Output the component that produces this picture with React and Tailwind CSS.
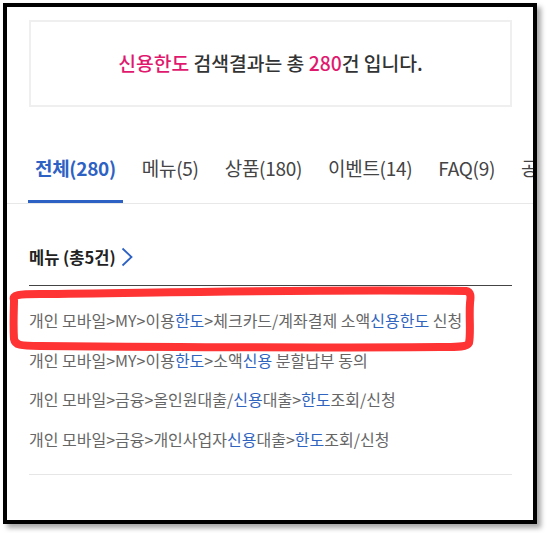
import React from 'react'

const font = { fontFamily: '"Noto Sans CJK KR", "Noto Sans", sans-serif' }

const tabs = ['메뉴(5)', '상품(180)', '이벤트(14)', 'FAQ(9)', '공지사항(72)']

// each item is a list of [text, highlighted]
const items = [
    [['개인 모바일>MY>이용', false], ['한도', true], ['>체크카드/계좌결제 소액', false], ['신용한도', true], [' 신청', false]],
    [['개인 모바일>MY>이용', false], ['한도', true], ['>소액', false], ['신용', true], [' 분할납부 동의', false]],
    [['개인 모바일>금융>올인원대출/', false], ['신용', true], ['대출>', false], ['한도', true], ['조회/신청', false]],
    [['개인 모바일>금융>개인사업자', false], ['신용', true], ['대출>', false], ['한도', true], ['조회/신청', false]],
]

const MenuRow = ({ parts }) => {
    return <li className="h-[39.5px] leading-[39.5px] whitespace-pre text-[16px] text-[#666]">
        {parts.map(([t, hi], i) => (
            <span key={i} className={hi ? 'text-[#2f64bf]' : ''}>{t}</span>
        ))}
    </li>
}

export default function App() {
    return (
        <div className="relative w-[547px] h-[533px] bg-white" style={font}>
            <div className="ml-[3px] mt-[3px] w-[534px] h-[521px] border-4 border-black overflow-hidden bg-white shadow-[4px_4px_5px_rgba(0,0,0,0.35)]">
                {/* search result banner */}
                <div className="ml-[22px] mt-[13px] w-[483px] h-[87px] border-2 border-[#efefef] flex items-center justify-center">
                    <p className="text-[19.3px] font-medium text-[#333]">
                        <span className="text-[#e0196f]">신용한도</span> 검색결과는 총 <span className="text-[#e0196f]">280</span>건 입니다.
                    </p>
                </div>

                {/* tabs */}
                <div className="mt-[42px] border-b border-[#e8e8e8]">
                    <div className="flex pl-[21px] gap-[12px] whitespace-nowrap">
                        <div className="px-[7px] h-[54px] pb-[12px] flex items-center border-b-[3px] border-[#2d62c4] text-[19px] font-bold text-[#2d62c4] tracking-[-0.3px]">전체(280)</div>
                        {tabs.map((t) => (
                            <div key={t} className="px-[7px] h-[54px] pb-[12px] flex items-center border-b-[3px] border-transparent text-[19px] text-[#444] tracking-[-0.3px]">{t}</div>
                        ))}
                    </div>
                </div>

                {/* menu section */}
                <div className="px-[22px] mt-[41px]">
                    <div className="flex items-center gap-[4px] h-[24px]">
                        <span className="text-[16.5px] font-bold text-[#222]">메뉴 (총5건)</span>
                        <svg width="14" height="20" viewBox="0 0 14 20" fill="none" stroke="#2d62c4" strokeWidth="1.8">
                            <path d="M2.5 1.5 L11.5 10 L2.5 18.5" />
                        </svg>
                    </div>
                    <ul className="mt-[16px] w-[483px] border-t border-[#444] pt-[15px] pb-[15px]">
                        {items.map((p, i) => <MenuRow key={i} parts={p} />)}
                    </ul>
                    <div className="w-[483px] h-px bg-[#e6e6e6]" />
                </div>
            </div>

            {/* red highlight marker drawn over the first row */}
            <svg className="absolute inset-0 pointer-events-none" width="547" height="533">
                <path d="M14 297 C 12 292, 18 291, 40 291 C 150 290, 300 286, 466 288 C 471 289, 471 293, 470 300 C 469 315, 471 330, 469 340 C 467 344, 460 344, 440 344 C 300 345, 150 344, 40 343 C 20 343, 15 342, 14 336 C 13 320, 14 305, 14 297 Z"
                    fill="none" stroke="#fe3334" strokeWidth="8" strokeLinejoin="round" />
            </svg>
        </div>
    )
}
